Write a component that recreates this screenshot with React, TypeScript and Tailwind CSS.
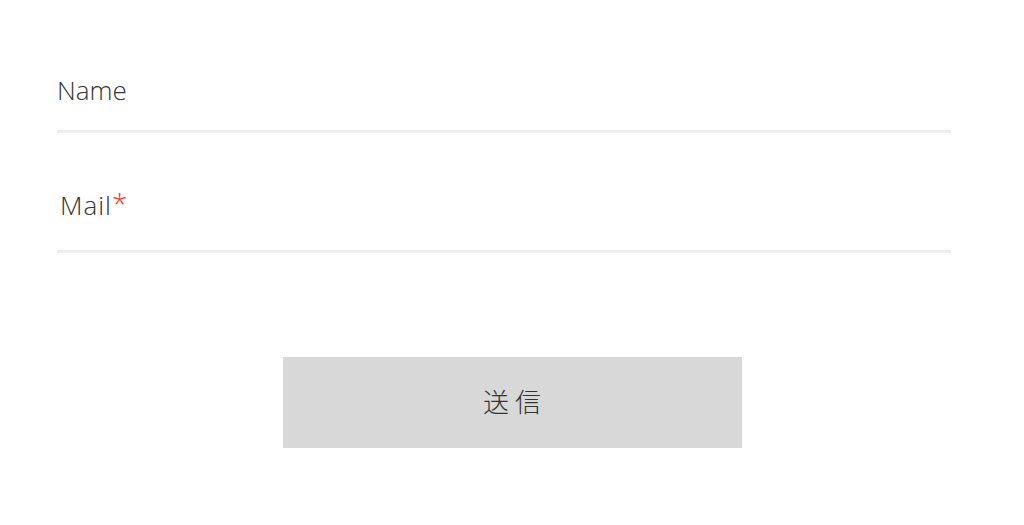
export default function App() {
  return (
    <div className="w-[1024px] h-[525px] bg-white font-['Open_Sans','Noto_Sans_CJK_JP',sans-serif] text-[#333]">
      <form className="pl-[57px] pr-[73px] pt-[13px]" onSubmit={(e) => e.preventDefault()}>
        <div className="h-[120px] border-b-[3px] border-[#eeeeee] pt-[59px]">
          <label className="block text-[26px] leading-[36px] font-light">Name</label>
        </div>
        <div className="h-[120px] border-b-[3px] border-[#eeeeee] pt-[53px]">
          <label className="block text-[26px] leading-[36px] font-light pl-[3px] tracking-[1px]">
            Mail<span className="text-[#ff3030] text-[28px] relative -top-[1px]">*</span>
          </label>
        </div>
      </form>
      <div className="flex justify-center pt-[104px]">
        <button className="w-[459px] h-[91px] bg-[#d8d8d8] text-[26px] tracking-[6px] pl-[6px] font-light text-[#333]">
          送信
        </button>
      </div>
    </div>
  );
}
